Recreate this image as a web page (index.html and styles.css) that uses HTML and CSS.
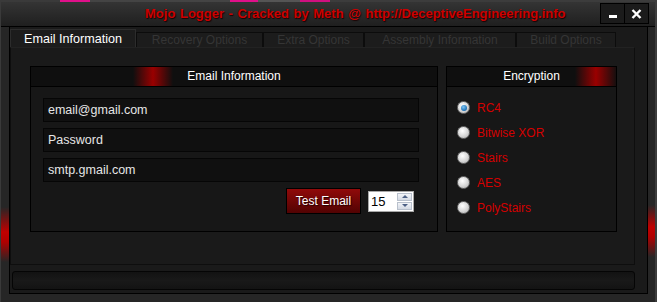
FILE: index.html
```html
<!DOCTYPE html>
<html lang="en">
<head>
  <meta charset="UTF-8" />
  <title>Mojo Logger</title>
  <link rel="stylesheet" href="styles.css">
</head>
<body>
  <div class="window">
    <div class="titlebar">
      <div class="title">Mojo Logger - Cracked by Meth @ http://DeceptiveEngineering.info</div>
      <div class="caption-btns">
        <div class="cap-btn"><span class="min-bar"></span></div>
        <div class="cap-btn">
          <svg width="11" height="10" viewBox="0 0 11 10">
            <path d="M1.5 1 L9.5 9 M9.5 1 L1.5 9" stroke="#fff" stroke-width="2.4" />
          </svg>
        </div>
      </div>
    </div>

    <div class="frame">
      <div class="client">
        <div class="tabs">
          <div class="tab active tab-email">Email Information</div>
          <div class="tab tab-recovery">Recovery Options</div>
          <div class="tab tab-extra">Extra Options</div>
          <div class="tab tab-assembly">Assembly Information</div>
          <div class="tab tab-build">Build Options</div>
        </div>

        <div class="tab-page">
          <div class="group email-group">
            <div class="group-header email-header">Email Information</div>
            <div class="group-body">
              <div class="textbox">email@gmail.com</div>
              <div class="textbox">Password</div>
              <div class="textbox">smtp.gmail.com</div>
              <div class="button-row">
                <button class="test-btn">Test Email</button>
                <div class="spinner">
                  <span class="spin-value">15</span>
                  <div class="spin-btns">
                    <div class="spin-btn"><span class="arrow-up"></span></div>
                    <div class="spin-btn"><span class="arrow-down"></span></div>
                  </div>
                </div>
              </div>
            </div>
          </div>

          <div class="group enc-group">
            <div class="group-header enc-header">Encryption</div>
            <div class="group-body radios">
              <div class="radio-row"><span class="radio checked"></span>RC4</div>
              <div class="radio-row"><span class="radio"></span>Bitwise XOR</div>
              <div class="radio-row"><span class="radio"></span>Stairs</div>
              <div class="radio-row"><span class="radio"></span>AES</div>
              <div class="radio-row"><span class="radio"></span>PolyStairs</div>
            </div>
          </div>
        </div>

        <div class="status"></div>
      </div>
    </div>
  </div>
</body>
</html>
```

FILE: styles.css
```css
* {
  margin: 0;
  padding: 0;
  box-sizing: border-box;
  font-family: 'Liberation Sans', Arial, sans-serif;
}

body {
  width: 657px;
  height: 302px;
  overflow: hidden;
  background:
    linear-gradient(90deg, #3a3a3a 0, #3a3a3a 60px, #e0108a 60px, #e0108a 90px, #444 90px, #444 230px,
      #e0108a 230px, #e0108a 258px, #555 258px, #555 300px, #d01080 300px, #d01080 330px, #3c3c3c 330px);
  display: flex;
  padding: 2px 2px 0 1px;
}

.window {
  width: 654px;
  height: 300px;
  background: #262626;
  display: flex;
  flex-direction: column;
}

/* title bar */
.titlebar {
  height: 25px;
  background: linear-gradient(#343434, #1f1f1f);
  border-bottom: 1px solid #000;
  display: flex;
  align-items: flex-start;
}

.title {
  flex: 1;
  padding-left: 144px;
  line-height: 23px;
  font-size: 13px;
  font-weight: bold;
  word-spacing: 1px;
  color: #cc0000;
  text-shadow: 1px 1px 1px #1a0000;
  white-space: nowrap;
}

.caption-btns {
  display: flex;
  margin: 1px 6px 0 0;
}

.cap-btn {
  width: 25px;
  height: 21px;
  background: #1b1b1b;
  border: 1px solid #000;
  display: flex;
  align-items: center;
  justify-content: center;
}

.cap-btn + .cap-btn {
  border-left: none;
  width: 24px;
}

.min-bar {
  width: 8px;
  height: 3px;
  background: #fff;
  margin-top: 5px;
}

/* window frame */
.frame {
  flex: 1;
  display: flex;
  padding: 0 7px 8px 8px;
  background:
    linear-gradient(transparent 180px, #c00000 205px, #b00000 215px, transparent 235px) left / 8px 100% no-repeat,
    linear-gradient(transparent 178px, #c00000 200px, #b00000 210px, transparent 230px) right / 7px 100% no-repeat,
    #262626;
}

.client {
  flex: 1;
  background: #1a1a1a;
  border-left: 1px solid #000;
  border-right: 1px solid #000;
  border-bottom: 1px solid #000;
  display: flex;
  flex-direction: column;
}

/* tabs */
.tabs {
  height: 20px;
  display: flex;
  align-items: flex-end;
}

.tab {
  height: 15px;
  background: #1c1c1c;
  border: 1px solid #0c0c0c;
  border-bottom: none;
  font-size: 12px;
  line-height: 14px;
  color: #353535;
  text-align: center;
  white-space: nowrap;
}

.tab.active {
  height: 18px;
  line-height: 18px;
  font-size: 12.6px;
  color: #fff;
  background: #1c1c1c;
  border-color: #2c2c2c;
}

.tab-email { width: 126px; }
.tab-recovery { width: 127px; }
.tab-extra { width: 101px; }
.tab-assembly { width: 152px; }
.tab-build { width: 100px; }

.tab-page {
  width: 625px;
  height: 218px;
  border: 1px solid #0e0e0e;
  border-top-color: #222;
  background: #1a1a1a;
  display: flex;
  gap: 8px;
  padding: 18px 0 0 19px;
}

/* group boxes */
.group {
  height: 166px;
  border: 1px solid #000;
  background: #171717;
  display: flex;
  flex-direction: column;
}

.email-group { width: 408px; }
.enc-group { width: 171px; }

.group-header {
  height: 20px;
  border-bottom: 1px solid #000;
  font-size: 12px;
  line-height: 19px;
  color: #fff;
  text-align: center;
}

.email-header {
  background: linear-gradient(90deg, rgba(150, 0, 0, 0), #9a0000, rgba(150, 0, 0, 0)) 102px 0 / 40px 100% no-repeat, #0f0f0f;
}

.enc-header {
  background: linear-gradient(90deg, rgba(150, 0, 0, 0), #9a0000, rgba(150, 0, 0, 0)) 128px 0 / 42px 100% no-repeat, #0f0f0f;
}

.group-body {
  flex: 1;
  padding: 11px 18px 0 12px;
  display: flex;
  flex-direction: column;
  gap: 6px;
}

.textbox {
  height: 24px;
  background: #101010;
  border: 1px solid #060606;
  color: #e6e6e6;
  font-size: 12.5px;
  line-height: 22px;
  padding-left: 4px;
}

.button-row {
  display: flex;
  justify-content: flex-end;
  align-items: center;
  gap: 7px;
  margin-right: 5px;
}

.test-btn {
  width: 75px;
  height: 26px;
  background: linear-gradient(#900a0a, #520303);
  border: 1px solid #000;
  color: #fff;
  font-size: 12px;
  text-shadow: 1px 1px 1px #200000;
}

.spinner {
  width: 46px;
  height: 21px;
  background: #fff;
  border: 1px solid #a8a8a8;
  display: flex;
  align-items: center;
}

.spin-value {
  flex: 1;
  font-size: 13px;
  padding-left: 2px;
  color: #000;
}

.spin-btns {
  width: 15px;
  display: flex;
  flex-direction: column;
  gap: 1px;
  margin-right: 1px;
}

.spin-btn {
  height: 8px;
  background: linear-gradient(#f2f4f8, #d4dae4);
  border: 1px solid #b8c0cc;
  display: flex;
  align-items: center;
  justify-content: center;
}

.arrow-up {
  border-left: 3px solid transparent;
  border-right: 3px solid transparent;
  border-bottom: 3px solid #4d6185;
}

.arrow-down {
  border-left: 3px solid transparent;
  border-right: 3px solid transparent;
  border-top: 3px solid #4d6185;
}

/* radios */
.radios {
  padding: 8px 0 0 10px;
  gap: 0;
}

.radio-row {
  height: 25px;
  display: flex;
  align-items: center;
  gap: 7px;
  color: #d40000;
  font-size: 12px;
}

.radio {
  width: 13px;
  height: 13px;
  border-radius: 50%;
  border: 1px solid #6e6e6e;
  background: radial-gradient(circle at 40% 35%, #fff, #d6d6d6 55%, #a8a8a8);
  display: flex;
  align-items: center;
  justify-content: center;
}

.radio.checked::after {
  content: '';
  width: 6px;
  height: 6px;
  border-radius: 50%;
  background: radial-gradient(circle at 40% 35%, #7cc4f4, #1b6fb4 70%, #0c4a86);
}

/* status strip */
.status {
  height: 19px;
  margin: 6px 12px 0 2px;
  border: 1px solid #050505;
  border-radius: 3px;
  background: linear-gradient(#121212, #191919 50%, #131313);
}
```
